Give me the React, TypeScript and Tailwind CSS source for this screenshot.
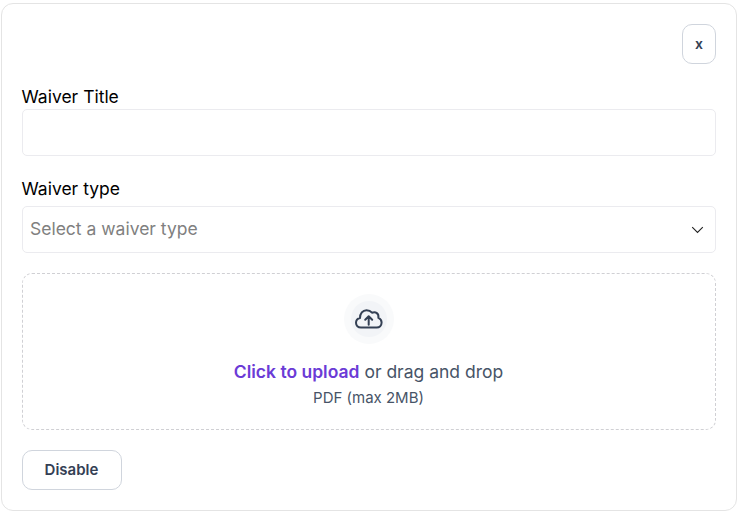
export default function App() {
  return (
    <div className="bg-white px-px pt-[3px] font-['Inter',sans-serif]">
      <section className="flex h-[508px] w-[736px] flex-col rounded-xl border border-[#e4e4e4] p-5">
        <div className="flex justify-end">
          <button className="h-10 w-[34px] rounded-[10px] border border-[#d0d5dd] text-sm font-semibold text-[#344054]">x</button>
        </div>
        <label className="-ml-[0.5px] mt-[21px] h-6 text-[17.5px] leading-6 text-black">Waiver Title</label>
        <input className="h-[47px] w-full rounded-[5px] border border-[#ebebef] px-2 outline-none" />
        <label className="-ml-[0.5px] mt-[21px] h-6 text-[17.5px] leading-6 text-black">Waiver type</label>
        <div className="mt-[5px] flex h-[47px] items-center justify-between rounded-[5px] border border-[#ebebef] pl-[7px] pr-[11px] text-[17.5px] text-[#808080]">
          <span className="pb-px leading-6">Select a waiver type</span>
          <svg width="13" height="8" viewBox="0 0 13 8" fill="none" stroke="#222" strokeWidth="1.1"><path d="M1.2 1.2 6.5 6.500l5.300-5.300" /></svg>
        </div>
        <div className="mt-5 flex h-[157px] flex-col items-center rounded-[10px] border border-dashed border-[#d0d0d4] pt-5">
          <div className="flex size-[50px] items-center justify-center rounded-full bg-[#f9fafb]">
            <div className="flex size-[36px] items-center justify-center rounded-full bg-[#f2f4f7]">
              <svg width="28" height="20" viewBox="0 0 28 20" fill="none" stroke="#344054" strokeWidth="2" strokeLinecap="round" strokeLinejoin="round">
                <path d="M6 18.500C3 18.500 1 16.500 1 13.800c0-2.500 1.600-4.400 4-4.900C5 4.500 7.700 1.200 11.500 1.200c2.300 0 4.200.9 5.500 2.500 3.800-1.400 7 .8 6.400 5.200 2.100.8 3.200 2.400 3.200 4.700 0 3-2.100 4.900-4.900 4.900z" />
                <path d="M13.700 15.700V7.500m-3.500 3.300 3.500-3.500 3.500 3.500" />
              </svg>
            </div>
          </div>
          <p className="-ml-px mt-4 text-[17.5px] leading-[24px] text-[#475467]"><span className="font-semibold text-[#6b3bd6]">Click to upload</span> or drag and drop</p>
          <p className="-ml-px mt-1 text-[15px] leading-5 text-[#475467]">PDF (max 2MB)</p>
        </div>
        <button className="mt-5 h-10 w-[100px] shrink-0 rounded-[10px] border border-[#d0d5dd] pr-px text-[15px] font-semibold text-[#344054]">Disable</button>
      </section>
    </div>
  );
}
